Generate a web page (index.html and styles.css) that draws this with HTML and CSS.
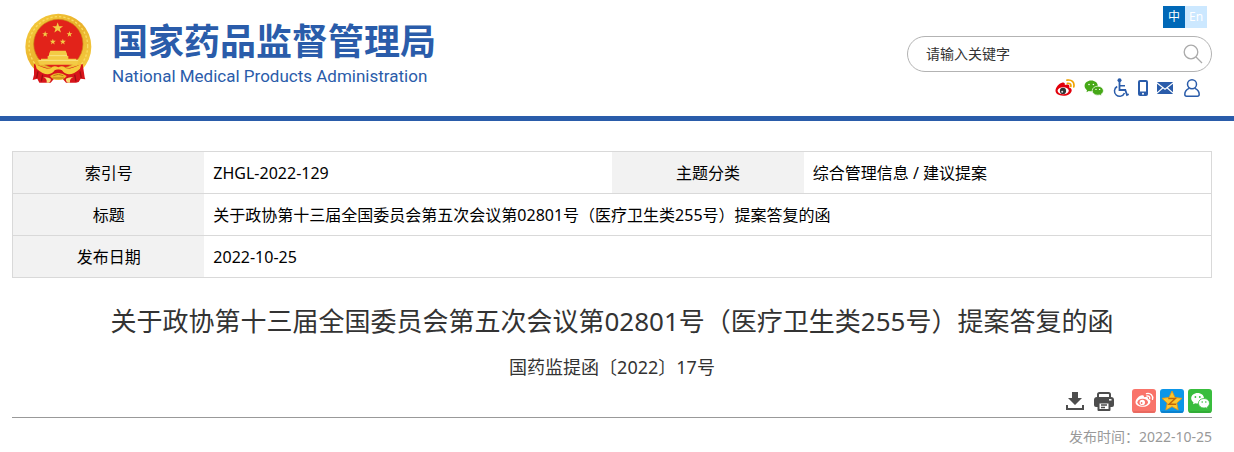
FILE: index.html
```
<!DOCTYPE html>
<html lang="zh-CN">
<head>
  <meta charset="UTF-8">
  <title>关于政协第十三届全国委员会第五次会议第02801号（医疗卫生类255号）提案答复的函</title>
  <meta name="viewport" content="width=device-width, initial-scale=1.0">
  <link rel="stylesheet" href="styles.css">
</head>
<body>
  <!-- shared shapes -->
  <svg class="sprite" aria-hidden="true">
    <symbol id="star" viewBox="-10 -10 20 20">
      <path d="M0-10 2.35-3.24 9.51-3.09 3.8 1.24 5.88 8.09 0 4-5.88 8.09-3.8 1.24-9.51-3.09-2.35-3.24Z"/>
    </symbol>
  </svg>

  <header class="header">
    <a class="logo" href="#">
      <svg class="emblem" viewBox="2 0 240 252" aria-hidden="true">
        <defs>
          <linearGradient id="gold" x1="0" y1="0" x2="1" y2="1">
            <stop offset="0" stop-color="#f6cf3f"/>
            <stop offset=".5" stop-color="#e9b02a"/>
            <stop offset="1" stop-color="#f8d548"/>
          </linearGradient>
        </defs>
        <ellipse cx="123" cy="116" rx="99" ry="99" fill="url(#gold)"/>
        <circle cx="123" cy="114" r="88" fill="none" stroke="#f9dc62" stroke-width="4" stroke-dasharray="7 6"/>
        <circle cx="123" cy="108" r="74" fill="#e2231a" stroke="#c98a16" stroke-width="2"/>
        <g fill="#f3cb45">
          <use href="#star" x="104" y="43" width="34" height="34"/>
          <use href="#star" x="74" y="69" width="19" height="19"/>
          <use href="#star" x="147" y="69" width="19" height="19"/>
          <use href="#star" x="97" y="92" width="19" height="19"/>
          <use href="#star" x="127" y="92" width="19" height="19"/>
          <path d="M99 128h46l4 10h-54ZM95 137h54v7h4v8h24v4h9l-7 14H67l-7-14h11v-4h20v-8h4Z"/>
        </g>
        <path d="M64 157h118M94 143h56" stroke="#fdf0a0" stroke-width="2"/>
        <!-- ribbon -->
        <path d="M50 168q34 12 56 16h34q22-4 56-16l6 40 2 6-14-2-6 10-8 2h-30l-10-12h-26l-10 12H66l-6-12-14 4 4-16Z" fill="#d8141b"/>
        <path d="M62 190l-4 20M76 200l-4 20M172 200l4 20M188 190l4 20" stroke="#9d0e12" stroke-width="4"/>
        <path d="M54 168q30 16 46 14 8-12 23-4 15-8 23 4 16 2 46-14l-4 14q-20 18-34 17-14-2-20-12-11-6-22 0-6 10-20 12-14 1-34-17Z" fill="#f6cb3b"/>
        <path d="M98 204q25-18 50 0-8 12-25 12t-25-12Z" fill="#efb92c"/>
        <path d="M108 203q15-8 30 0M106 210h34" fill="none" stroke="#b97915" stroke-width="3"/>
        <path d="M78 208q14-2 22 4 2 8-6 12h-6q2-12-10-16ZM168 208q-14-2-22 4-2 8 6 12h6q-2-12 10-16Z" fill="#f8dc78"/>
      </svg>
      <span class="logo-text">
        <span class="logo-cn">国家药品监督管理局</span>
        <span class="logo-en">National Medical Products Administration</span>
      </span>
    </a>

    <div class="tools">
      <nav class="lang">
        <a class="active" href="#">中</a>
        <a href="#">En</a>
      </nav>
      <form class="search">
        <input type="text" value="请输入关键字" aria-label="请输入关键字">
        <button type="button" aria-label="搜索">
          <svg width="20" height="20" viewBox="0 0 20 20" fill="none" stroke="#aaa" stroke-width="1.3"><circle cx="8" cy="8" r="6.8"/><path d="m13 13 6 6"/></svg>
        </button>
      </form>
      <nav class="links">
        <a href="#" aria-label="微博">
          <svg width="20" height="20" viewBox="0 0 20 20">
            <path d="M7.6 4.600C9.200 4.300 10.300 5.200 9.800 7c2-.9 4.800-.8 4.600 1.500l-.3 1c1.700.500 2.700 1.400 2.600 2.900-.2 3-3.900 5.400-8.400 5.400-4.700 0-8-2.200-7.800-5.200.2-3.100 3.600-7.300 7.100-8Z" fill="#e2000b"/>
            <ellipse cx="8.200" cy="12.800" rx="5.600" ry="3.500" fill="#fff"/>
            <circle cx="8" cy="12.900" r="3.100" fill="#333"/>
            <circle cx="7.200" cy="13.700" r="1" fill="#ddd"/>
            <path d="M12 2.200c4.600-1 7.800 2.200 6.800 6.600M12.400 5.300c2.400-.4 3.900 1 3.400 3.200" fill="none" stroke="#f0a400" stroke-width="1.700" stroke-linecap="round"/>
          </svg>
        </a>
        <a href="#" aria-label="微信">
          <svg width="20" height="20" viewBox="0 0 20 20">
            <path d="M7.200 2.600C3.500 2.600.6 5 .6 8c0 1.700 1 3.200 2.400 4.200l-.5 2L4.800 13c.8.200 1.500.300 2.400.300 3.700 0 6.600-2.300 6.600-5.300S10.900 2.600 7.200 2.600Z" fill="#46a817"/>
            <path d="M13.800 8.200c-3.200 0-5.600 2-5.600 4.500s2.400 4.500 5.600 4.500c.7 0 1.300-.1 1.900-.2l2 1-.5-1.700c1.300-.9 2.200-2.100 2.200-3.600 0-2.500-2.500-4.500-5.600-4.500Z" fill="#46a817" stroke="#fff" stroke-width=".7"/>
            <g fill="#fff"><circle cx="5" cy="6.500" r=".8"/><circle cx="9.400" cy="6.500" r=".8"/><circle cx="12" cy="11.400" r=".7"/><circle cx="15.600" cy="11.400" r=".7"/></g>
          </svg>
        </a>
        <a href="#" aria-label="无障碍">
          <svg width="16" height="20" viewBox="0 0 16 20" fill="none" stroke="#2a5caa" stroke-width="1.800">
            <circle cx="6.500" cy="2.200" r="2" fill="#2a5caa" stroke="none"/>
            <path d="M6.500 4v8h5.800l1.700 5 1.800-.8"/>
            <path d="M6.500 7.800H12M4.200 8.500a5.200 5.200 0 1 0 7.300 6.500" stroke-width="1.500"/>
          </svg>
        </a>
        <a href="#" aria-label="移动版">
          <svg width="10" height="16" viewBox="0 0 10 16"><rect width="10" height="16" rx="2" fill="#2a5caa"/><path d="M2 2h6v9.500H2Z" fill="#fff"/><circle cx="5" cy="13.700" r="1" fill="#fff"/></svg>
        </a>
        <a href="#" aria-label="邮箱">
          <svg width="16" height="12" viewBox="0 0 16 12"><rect width="16" height="12" rx="1" fill="#2a5caa"/><path d="m0 1 8 6.200L16 1M0 11l5.700-5M16 11l-5.700-5" fill="none" stroke="#fff" stroke-width="1.100"/></svg>
        </a>
        <a href="#" aria-label="个人中心">
          <svg width="16" height="18" viewBox="0 0 16 18" fill="none" stroke="#2a5caa" stroke-width="1.500"><circle cx="8" cy="5.300" r="4.500"/><path d="M5 9.300C2.500 10.600.8 12.700.8 15.200c0 1.300.6 2 1.800 2h10.800c1.200 0 1.800-.7 1.800-2 0-2.500-1.700-4.600-4.200-5.900"/></svg>
        </a>
      </nav>
    </div>
  </header>

  <main class="container">
    <table class="info">
      <tr>
        <th scope="row">索引号</th>
        <td>ZHGL-2022-129</td>
        <th scope="row">主题分类</th>
        <td>综合管理信息 / 建议提案</td>
      </tr>
      <tr>
        <th scope="row">标题</th>
        <td colspan="3">关于政协第十三届全国委员会第五次会议第02801号（医疗卫生类255号）提案答复的函</td>
      </tr>
      <tr>
        <th scope="row">发布日期</th>
        <td colspan="3">2022-10-25</td>
      </tr>
    </table>

    <h1 class="title">关于政协第十三届全国委员会第五次会议第02801号（医疗卫生类255号）提案答复的函</h1>
    <p class="doc-no">国药监提函〔2022〕17号</p>

    <div class="actions">
      <button type="button" aria-label="下载">
        <svg width="18" height="18" viewBox="0 0 18 18" fill="#4d4d4d"><path d="M6 0h6v6h4l-7 7-7-7h4Z"/><path d="M0 13h2v3h14v-3h2v5H0Z"/></svg>
      </button>
      <button type="button" aria-label="打印">
        <svg width="20" height="19" viewBox="0 0 20 19"><path d="M4 5V2.500Q4 1 5.500 1h9Q16 1 16 2.500V5" fill="#fff" stroke="#4d4d4d" stroke-width="2"/><path d="M3 5h14a3 3 0 0 1 3 3v5q0 2-2 2H2q-2 0-2-2V8a3 3 0 0 1 3-3Z" fill="#4d4d4d"/><path d="M4.500 10.500h11V18h-11Z" fill="#fff" stroke="#4d4d4d" stroke-width="2" stroke-linejoin="round"/><path d="M7 13h6M7 15.500h4" stroke="#4d4d4d" stroke-width="1.300"/><path d="M15 7.800h2.500" stroke="#fff" stroke-width="1.500"/></svg>
      </button>
      <a class="share" href="#" aria-label="分享到微博">
        <svg width="24" height="24" viewBox="0 0 24 24">
          <rect width="24" height="24" rx="3" fill="#f9746a"/><path d="M1 23h22" stroke="#d95f56"/>
          <path d="M10 6.300c1.500-.3 2.300.6 1.900 2 2.300-.8 4.700-.6 4.200 1.800 1.600.5 2.400 1.400 2.300 2.700-.2 2.900-3.600 5-7.600 5-4.200 0-7.500-1.900-7.300-4.800.2-2.800 3.500-6.200 6.500-6.700Z" fill="#fff"/>
          <ellipse cx="10.700" cy="13.300" rx="5.300" ry="3.500" fill="#f9746a"/><circle cx="10.300" cy="13.400" r="2.700" fill="#fff"/><circle cx="9.600" cy="14" r=".9" fill="#f9746a"/>
          <path d="M14.500 4.600c4-.9 7 2 6 5.800M14.900 7c2-.3 3.200.9 2.800 2.600" fill="none" stroke="#fff" stroke-width="1.400" stroke-linecap="round"/>
        </svg>
      </a>
      <a class="share" href="#" aria-label="分享到QQ空间">
        <svg width="24" height="24" viewBox="0 0 24 24">
          <rect width="24" height="24" rx="3" fill="#0c96e8"/><path d="M1 23h22" stroke="#0a6fb5"/>
          <path d="m12 2 3 6.500 7 .8-5.200 4.800L18.200 21 12 17.600 5.800 21l1.400-6.900L2 9.300l7-.8Z" fill="#fdc72d" stroke="#e89512" stroke-width=".8" stroke-linejoin="round"/>
          <path d="M8.300 9.600h7l-6.200 5.600h7" fill="none" stroke="#c26808" stroke-width="1.500"/>
        </svg>
      </a>
      <a class="share" href="#" aria-label="分享到微信">
        <svg width="24" height="24" viewBox="0 0 24 24">
          <rect width="24" height="24" rx="3" fill="#39bd3e"/><path d="M1 23h22" stroke="#2c9d31"/>
          <path d="M9.600 4C6 4 3.200 6.400 3.200 9.300c0 1.700.9 3.100 2.300 4.100L5 15.300l2.300-1.100c.7.200 1.500.300 2.300.300 3.600 0 6.400-2.300 6.400-5.200S13.200 4 9.600 4Z" fill="#fff"/>
          <path d="M16 9.500c-3.200 0-5.600 2.100-5.600 4.700S12.800 19 16 19c.7 0 1.300-.1 1.900-.300l1.900 1-.4-1.800c1.300-.9 2.100-2.200 2.100-3.700 0-2.600-2.400-4.700-5.500-4.700Z" fill="#fff" stroke="#39bd3e" stroke-width=".8"/>
          <g fill="#39bd3e"><circle cx="7.400" cy="8" r=".9"/><circle cx="11.800" cy="8" r=".9"/><circle cx="14.200" cy="13" r=".8"/><circle cx="17.800" cy="13" r=".8"/></g>
        </svg>
      </a>
    </div>
    <p class="date">发布时间：2022-10-25</p>
  </main>
</body>
</html>
```
FILE: styles.css
```
* {
  box-sizing: border-box;
}
body {
  margin: 0;
  background: #fff;
  color: #000;
  font-family: "Noto Sans", "Noto Sans CJK SC", sans-serif;
  font-size: 16px;
  line-height: 24px;
}
a {
  color: inherit;
  text-decoration: none;
}
svg {
  display: block;
}
button {
  padding: 0;
  border: 0;
  background: none;
  cursor: pointer;
}
.sprite {
  position: absolute;
  width: 0;
  height: 0;
}

/* header */
.header {
  display: flex;
  justify-content: space-between;
  align-items: flex-start;
  padding: 6px 22px 18px 18px;
  border-bottom: 5px solid #2a5caa;
}
.logo {
  display: flex;
  gap: 14px;
  padding-top: 2px;
  color: #2a5caa;
}
.emblem {
  width: 80px;
  height: 84px;
}
.logo-text {
  display: flex;
  flex-direction: column;
  padding-top: 5px;
}
.logo-cn {
  font-family: "Noto Sans CJK SC", sans-serif;
  font-size: 36px;
  font-weight: 700;
  line-height: 52px;
}
.logo-en {
  font-family: Roboto, sans-serif;
  font-size: 17px;
  line-height: 22px;
}
.tools {
  display: flex;
  flex-direction: column;
  align-items: flex-end;
}
.lang {
  display: flex;
  margin-right: 5px;
  font-size: 12px;
  line-height: 22px;
  text-align: center;
}
.lang a {
  width: 22px;
  background: #cce8ff;
  color: #fff;
}
.lang .active {
  background: #0068b7;
}
.search {
  display: flex;
  align-items: center;
  width: 305px;
  height: 36px;
  margin: 8px 0 6px;
  padding: 0 8px 0 18px;
  border: 1px solid #b3b3b3;
  border-radius: 18px;
}
.search input {
  flex: 1;
  min-width: 0;
  padding: 0;
  border: 0;
  outline: none;
  background: none;
  color: #333;
  font: inherit;
  font-size: 14px;
}
.links {
  display: flex;
  align-items: center;
  gap: 9px;
  height: 20px;
  margin-right: 12px;
}
.links a:last-child {
  margin-left: 2px;
}

/* document info */
.container {
  margin: 30px 22px 0 12px;
}
.info {
  width: 100%;
  border: 1px solid #d9d9d9;
  border-collapse: collapse;
  table-layout: fixed;
}
.info tr {
  border-bottom: 1px solid #d9d9d9;
}
.info th,
.info td {
  height: 42px;
  padding: 8px 9px;
}
.info th {
  width: 16%;
  background: #f2f2f2;
  font-weight: 400;
  text-align: center;
}
.info td {
  text-align: left;
}

/* article */
.title {
  margin: 23px 0 0;
  color: #333;
  font-size: 26px;
  font-weight: 400;
  line-height: 40px;
  text-align: center;
}
.doc-no {
  margin: 12px 0 8px;
  color: #333;
  font-size: 18px;
  line-height: 28px;
  text-align: center;
}
.actions {
  display: flex;
  justify-content: flex-end;
  align-items: center;
  gap: 4px;
  padding-bottom: 4px;
  border-bottom: 1px solid #999;
}
.actions button {
  margin-right: 6px;
}
.actions button + a {
  margin-left: 8px;
}
.date {
  margin: 7px 0 0;
  color: #999;
  font-size: 14px;
  text-align: right;
}
```
